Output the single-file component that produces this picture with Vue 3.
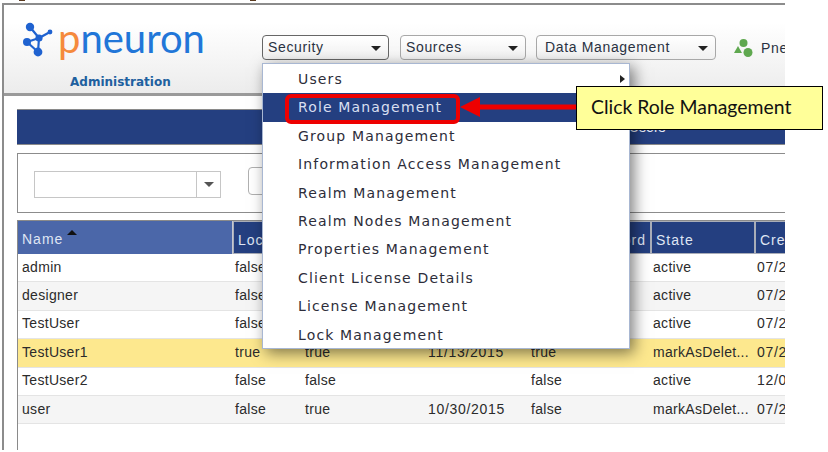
<template>
  <div class="page">
    <div class="top-strip">
      <span class="top-mark"></span>
      <span class="top-mark top-mark-2"></span>
    </div>

    <div class="window">
      <header class="app-header">
        <div class="brand">
          <div class="logo">
            <svg class="logo-icon" viewBox="0 0 32 36" width="32" height="36">
              <g stroke="#1f62d0" stroke-width="2.2" fill="none">
                <path d="M8 5L17 16L28 10" />
                <path d="M5 20L17 16L16 30L5 20" />
              </g>
              <g fill="#1f62d0">
                <circle cx="8" cy="5" r="4.2" />
                <circle cx="5" cy="20" r="4" />
                <circle cx="16" cy="30" r="4.4" />
                <circle cx="17" cy="16" r="3.6" />
                <circle cx="28" cy="10" r="2.4" />
              </g>
            </svg>
            <span class="logo-text"><span class="logo-p">p</span>neuron</span>
          </div>
          <div class="brand-sub">Administration</div>
        </div>

        <nav class="nav">
          <button
            v-for="item in navItems"
            :key="item.label"
            type="button"
            class="nav-btn"
            :class="[item.cls, { active: item.active }]"
          >
            <span class="nav-label">{{ item.label }}</span>
            <i class="caret"></i>
          </button>
          <div class="nav-user">
            <svg viewBox="0 0 20 20" width="20" height="20">
              <circle cx="10.5" cy="5" r="4" fill="#5fa84f" />
              <path d="M5 8L9 15H1Z" fill="#5fa84f" />
              <circle cx="15" cy="14.500" r="4.500" fill="#5fa84f" />
            </svg>
            <span class="nav-user-name">Pneuron</span>
          </div>
        </nav>
      </header>

      <main class="content">
        <div class="title-bar"><span class="title-text">Users</span></div>

        <div class="filter-panel">
          <div class="combo">
            <input class="combo-input" type="text" />
            <span class="combo-btn"><i class="combo-caret"></i></span>
          </div>
          <button type="button" class="filter-btn"></button>
        </div>

        <div class="grid">
          <div class="grid-row grid-head">
            <div
              v-for="col in columns"
              :key="col.label"
              class="head-cell"
              :class="col.cls"
            >
              <span class="head-label">{{ col.label }}</span>
              <i v-if="col.sorted" class="sort-mark"></i>
            </div>
          </div>
          <div
            v-for="(row, i) in rows"
            :key="row.name"
            class="grid-row body-row"
            :class="{ odd: i % 2 === 1, picked: row.picked }"
          >
            <div class="cell cell-name">{{ row.name }}</div>
            <div class="cell">{{ row.locked }}</div>
            <div class="cell">{{ row.enabled }}</div>
            <div class="cell cell-date">{{ row.date }}</div>
            <div class="cell">{{ row.reset }}</div>
            <div class="cell">{{ row.state }}</div>
            <div class="cell cell-date">{{ row.created }}</div>
          </div>
        </div>
      </main>
    </div>

    <ul class="menu">
      <li
        v-for="item in menuItems"
        :key="item"
        class="menu-item"
        :class="{ selected: item === 'Role Management' }"
      >
        {{ item }}
        <i v-if="item === 'Users'" class="menu-chevron"></i>
      </li>
    </ul>

    <div class="red-box"></div>
    <svg class="arrow" viewBox="0 0 120 22" width="120" height="22">
      <path d="M0 11L20 1V8.500H120V13.500H20V21Z" fill="#ee0000" />
    </svg>
    <div class="callout">Click Role Management</div>
  </div>
</template>

<script setup>
const navItems = [
  { label: 'Security', cls: 'nav-security', active: true },
  { label: 'Sources', cls: 'nav-sources' },
  { label: 'Data Management', cls: 'nav-data' }
]

const menuItems = [
  'Users',
  'Role Management',
  'Group Management',
  'Information Access Management',
  'Realm Management',
  'Realm Nodes Management',
  'Properties Management',
  'Client License Details',
  'License Management',
  'Lock Management'
]

const columns = [
  { label: 'Name', cls: 'head-name', sorted: true },
  { label: 'Locked' },
  { label: 'Enabled' },
  { label: 'Date' },
  { label: 'Password', cls: 'head-right' },
  { label: 'State' },
  { label: 'Created' }
]

const rows = [
  { name: 'admin', locked: 'false', enabled: '', date: '', reset: '', state: 'active', created: '07/22/2015' },
  { name: 'designer', locked: 'false', enabled: '', date: '', reset: '', state: 'active', created: '07/22/2015' },
  { name: 'TestUser', locked: 'false', enabled: '', date: '', reset: '', state: 'active', created: '07/22/2015' },
  { name: 'TestUser1', locked: 'true', enabled: 'true', date: '11/13/2015', reset: 'true', state: 'markAsDelet...', created: '07/22/2015', picked: true },
  { name: 'TestUser2', locked: 'false', enabled: 'false', date: '', reset: 'false', state: 'active', created: '12/01/2015' },
  { name: 'user', locked: 'false', enabled: 'true', date: '10/30/2015', reset: 'false', state: 'markAsDelet...', created: '07/22/2015' }
]
</script>

<style>
html,
body {
  margin: 0;
  background: #fff;
}
</style>

<style scoped>
.page {
  position: relative;
  width: 828px;
  height: 452px;
  overflow: hidden;
  background: #fff;
  font-family: "Liberation Sans", Arial, sans-serif;
  color: #222;
}

.top-strip {
  display: flex;
  height: 3px;
  padding-left: 19px;
  gap: 225px;
}

.top-mark {
  width: 6px;
  height: 1px;
  background: #5a3a20;
}

.window {
  display: flex;
  flex-direction: column;
  width: 781px;
  height: 445px;
  margin-left: 2px;
  border-top: 2px solid #8c8c8c;
  border-left: 2px solid #8c8c8c;
  overflow: hidden;
}

.app-header {
  display: flex;
  flex-shrink: 0;
  height: 88px;
  background: linear-gradient(#fff 20%, #ececec);
  border-bottom: 3px solid #9a9a9a;
}

.brand {
  width: 258px;
  flex-shrink: 0;
  padding: 15px 0 0 18px;
  box-sizing: border-box;
}

.logo {
  display: flex;
  align-items: flex-start;
  gap: 4px;
  height: 42px;
}

.logo-icon {
  flex-shrink: 0;
  margin-top: 2px;
}

.logo-text {
  margin-top: -3px;
  font-family: Lato, sans-serif;
  font-weight: 400;
  font-size: 40px;
  line-height: 42px;
  color: #2176d8;
}

.logo-p {
  color: #f58a3c;
}

.brand-sub {
  margin: 12px 0 0 48px;
  font-family: "DejaVu Sans", sans-serif;
  font-size: 12px;
  font-weight: 700;
  color: #20609f;
  line-height: 16px;
}

.nav {
  display: flex;
  align-items: flex-start;
  padding-top: 30px;
  min-width: 0;
}

.nav-btn {
  display: flex;
  align-items: center;
  justify-content: space-between;
  flex-shrink: 0;
  height: 25px;
  box-sizing: border-box;
  padding: 0 7px 0 5px;
  background: linear-gradient(#fff, #f1f1f1);
  border: 1px solid #a8a8a8;
  border-radius: 4px;
  font-family: "Liberation Sans", Arial, sans-serif;
  font-size: 14px;
  letter-spacing: 0.65px;
  color: #2a3242;
}

.nav-label {
  margin-top: -2px;
}

.nav-btn.active {
  border-color: #666;
}

.nav-security {
  width: 127px;
  margin-right: 11px;
}

.nav-sources {
  width: 126px;
  margin-right: 10px;
}

.nav-data {
  width: 180px;
  margin-right: 17px;
  padding-left: 8px;
}

.caret {
  width: 0;
  height: 0;
  border-left: 5px solid transparent;
  border-right: 5px solid transparent;
  border-top: 5px solid #222;
  margin-top: 2px;
}

.nav-user {
  display: flex;
  align-items: center;
  flex-shrink: 0;
  gap: 8px;
  height: 25px;
  white-space: nowrap;
  font-size: 14px;
  letter-spacing: 0.7px;
  color: #2a3242;
}

.content {
  display: flex;
  flex-direction: column;
  flex: 1;
  min-height: 0;
  padding: 13px 0 0 13px;
}

.title-bar {
  flex-shrink: 0;
  height: 36px;
  box-sizing: border-box;
  background: #243f80;
  border-top: 1px solid #8a8a8a;
  border-bottom: 1px solid #8a8a8a;
  padding: 9px 0 0 612px;
  color: #e6eaf4;
  font-size: 14px;
}

.filter-panel {
  flex-shrink: 0;
  display: flex;
  align-items: flex-start;
  height: 60px;
  box-sizing: border-box;
  margin-top: 8px;
  border: 1px solid #8c8c8c;
  border-right: 0;
  padding: 13px 0 0 16px;
}

.combo {
  display: flex;
  margin-top: 4px;
}

.combo-input {
  width: 163px;
  height: 27px;
  box-sizing: border-box;
  border: 1px solid #c6c6c6;
  background: #fff;
  padding: 0;
  outline: none;
}

.combo-btn {
  display: flex;
  align-items: center;
  justify-content: center;
  width: 24px;
  height: 27px;
  box-sizing: border-box;
  border: 1px solid #c6c6c6;
  border-left: 0;
}

.combo-caret {
  width: 0;
  height: 0;
  border-left: 5px solid transparent;
  border-right: 5px solid transparent;
  border-top: 5px solid #555;
}

.filter-btn {
  width: 60px;
  height: 28px;
  margin-left: 27px;
  background: #fff;
  border: 1px solid #b0b0b0;
  border-radius: 4px;
}

.grid {
  flex: 1;
  margin-top: 7px;
  border-top: 1px solid #8a8a8a;
  border-left: 1px solid #8a8a8a;
  font-size: 14px;
}

.grid-row {
  display: grid;
  grid-template-columns: 215px 70px 123px 103px 122px 104px 90px;
}

.grid-head {
  height: 33px;
  color: #dfe5f3;
  letter-spacing: 1px;
}

.head-cell {
  display: flex;
  align-items: center;
  box-sizing: border-box;
  padding: 5px 0 0 4px;
  background: #243f80;
  border: 1px solid #a9adb8;
  white-space: nowrap;
  overflow: hidden;
}

.head-name {
  background: #4b67a9;
  border: 0;
  border-right: 1px solid #c4c8d2;
  padding-left: 4px;
  align-items: flex-start;
  padding-top: 10px;
}

.head-right {
  justify-content: flex-end;
  padding-right: 4px;
}

.sort-mark {
  width: 0;
  height: 0;
  margin: -1px 0 0 4px;
  border-left: 5px solid transparent;
  border-right: 5px solid transparent;
  border-bottom: 5px solid #111;
}

.body-row {
  height: 28.4px;
  box-sizing: border-box;
  align-items: center;
  background: #fff;
  border-bottom: 1px solid #e4e4e4;
  letter-spacing: 0.3px;
  color: #2b2b2b;
}

.body-row.odd {
  background: #f5f5f5;
}

.body-row.picked {
  background: #fde88e;
}

.cell {
  padding: 0 2px 2px;
  white-space: nowrap;
  overflow: hidden;
}

.cell-name {
  padding-left: 4px;
}

.cell-date {
  letter-spacing: 0.7px;
}

.menu {
  position: absolute;
  left: 262px;
  top: 63px;
  width: 368px;
  height: 286px;
  box-sizing: border-box;
  margin: 0;
  padding: 1px 0 0;
  list-style: none;
  background: #fff;
  border: 1px solid #a8b7d2;
  box-shadow: 4px 4px 14px rgba(0, 0, 0, 0.5);
  font-family: "DejaVu Sans", sans-serif;
  font-size: 14px;
  letter-spacing: 1.15px;
  color: #2d2d3a;
}

.menu-item {
  position: relative;
  height: 28.4px;
  line-height: 28.4px;
  padding-left: 35px;
  white-space: nowrap;
}

.menu-item.selected {
  background: #243f80;
  color: #d9dff0;
}

.menu-chevron {
  position: absolute;
  right: 4px;
  top: 10px;
  width: 0;
  height: 0;
  border-top: 4px solid transparent;
  border-bottom: 4px solid transparent;
  border-left: 5px solid #222;
}

.red-box {
  position: absolute;
  left: 285px;
  top: 94px;
  width: 175px;
  height: 30px;
  box-sizing: border-box;
  border: 4px solid #ee0000;
  border-radius: 6px;
}

.arrow {
  position: absolute;
  left: 460px;
  top: 96px;
}

.callout {
  position: absolute;
  left: 576px;
  top: 86px;
  width: 247px;
  height: 44px;
  box-sizing: border-box;
  padding-left: 14px;
  background: #ffff99;
  border: 1px solid #000;
  font-family: Lato, sans-serif;
  font-size: 19.4px;
  line-height: 40px;
  color: #111;
}
</style>
